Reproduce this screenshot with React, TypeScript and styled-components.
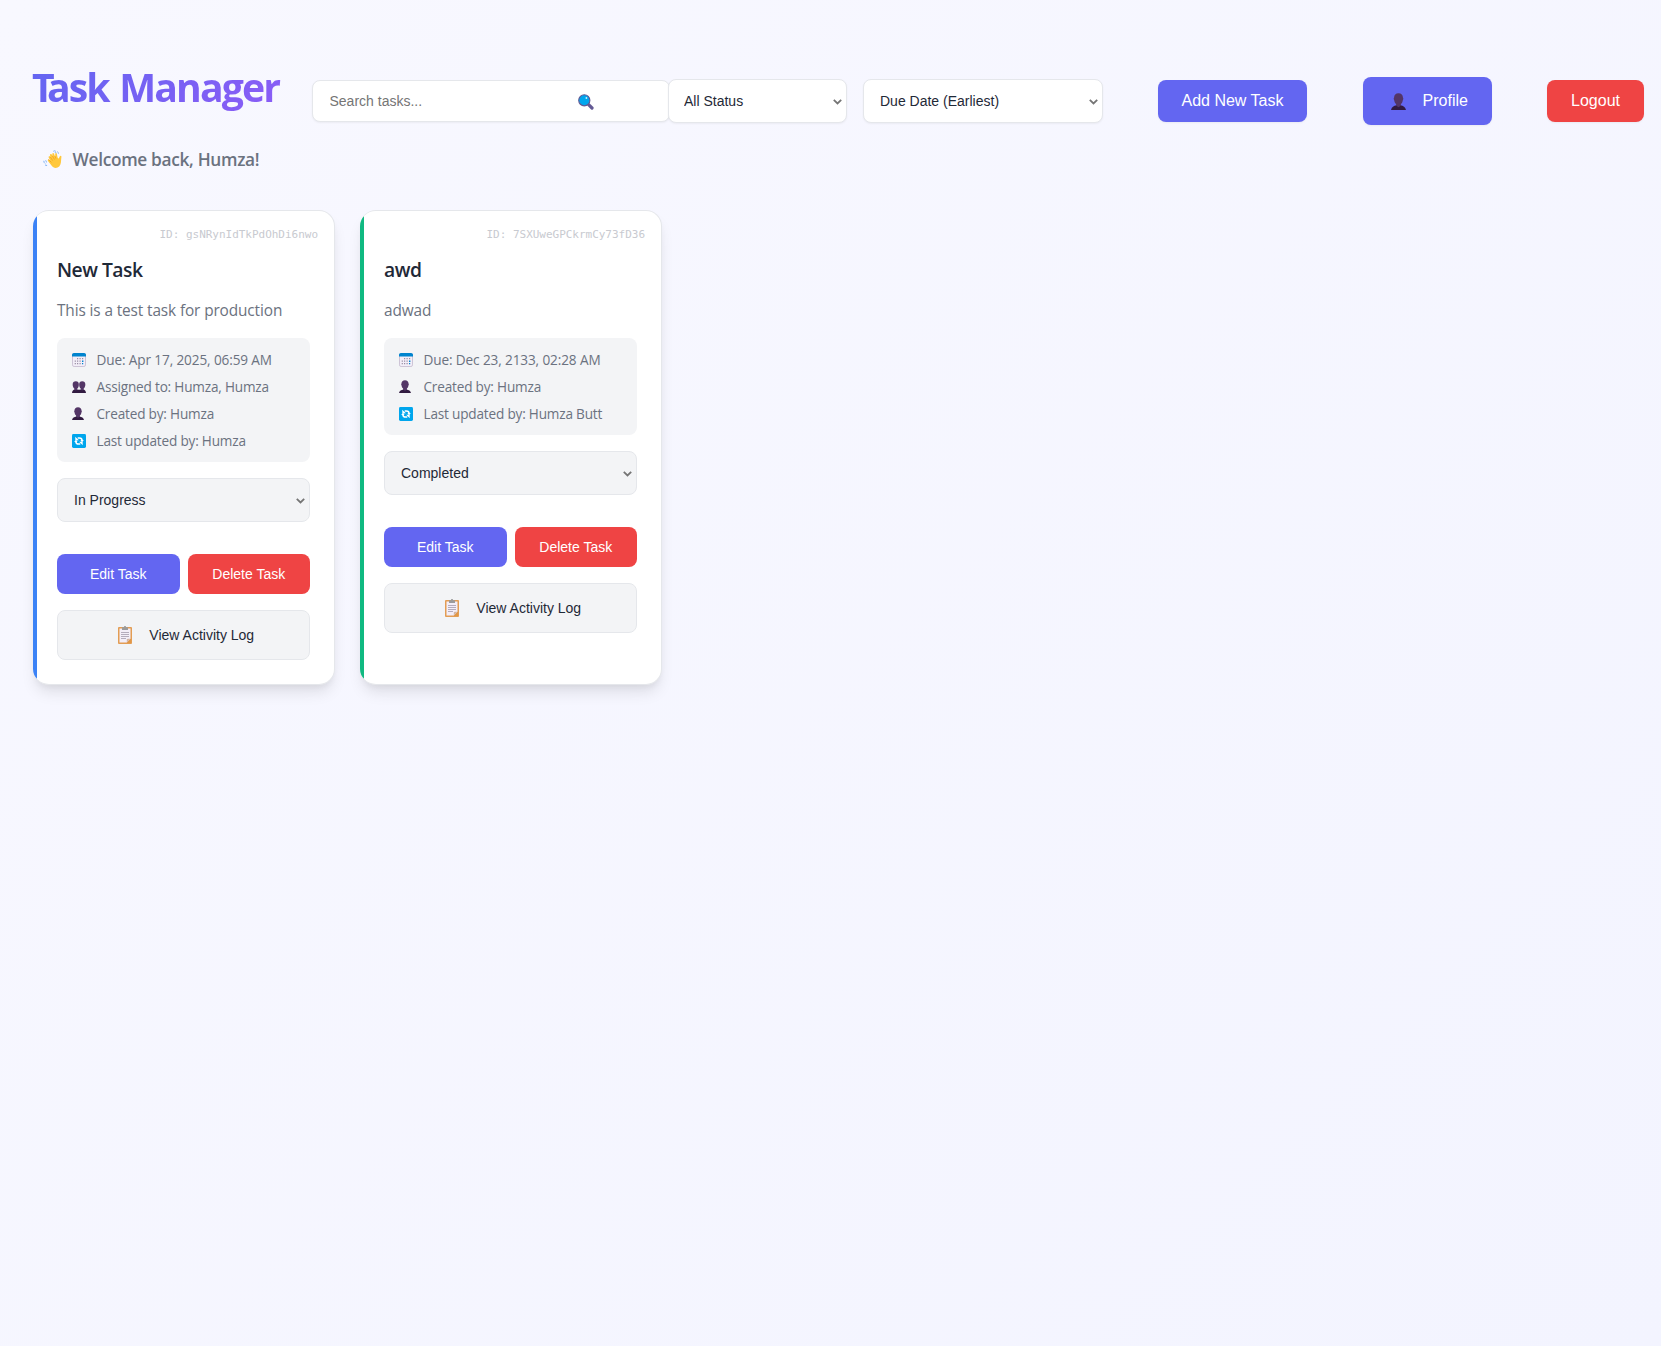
import React from "react";
import styled, { createGlobalStyle } from "styled-components";

const UI_FONT = '"Open Sans", "Noto Sans", sans-serif';
const CONTROL_FONT = '"Liberation Sans", Arial, sans-serif';

const GlobalStyle = createGlobalStyle`
  *, *::before, *::after { box-sizing: border-box; }
  body {
    margin: 0;
    font-family: ${UI_FONT};
    color: #1f2937;
  }
  h1, h2, p { margin: 0; }
`;

const Page = styled.div`
  min-height: 100vh;
  padding: 77px 17px 0 33px;
  background: linear-gradient(135deg, #f8f8ff 0%, #f3f4ff 100%);
`;

const Header = styled.header`
  display: flex;
  align-items: center;
  height: 48px;
`;

const Title = styled.h1`
  width: 280px;
  height: 48px;
  margin: 0 0 28px -1px;
  font-size: 39.2px;
  line-height: 48px;
  font-weight: 700;
  letter-spacing: -1.85px;
  word-spacing: 2px;
  white-space: nowrap;
  background: linear-gradient(135deg, #6366f1, #8b5cf6);
  background-size: 249px 100%;
  -webkit-background-clip: text;
  background-clip: text;
  color: transparent;
  &::first-letter { letter-spacing: -7.8px; }
`;

const SearchBox = styled.div`
  display: flex;
  align-items: center;
  width: 357.5px;
  height: 42px;
  padding: 0 75px 0 16px;
  border: 1px solid #e5e7eb;
  border-radius: 8px;
  background: #fff;
  box-shadow: 0 1px 2px rgba(0, 0, 0, 0.05);
  & > svg { margin-top: 2px; }
`;

const SearchInput = styled.input`
  flex: 1;
  min-width: 0;
  padding: 0 0 0 0.5px;
  border: 0;
  outline: 0;
  background: transparent;
  font: 14px ${CONTROL_FONT};
  &::placeholder { color: #757575; }
`;

const SelectWrap = styled.div<{ $width: number }>`
  display: grid;
  align-items: center;
  width: ${(p) => p.$width}px;
  & > * { grid-area: 1 / 1; }
  & > svg {
    justify-self: end;
    margin: 1px 5px 0 0;
    pointer-events: none;
  }
`;

const NativeSelect = styled.select<{ $soft?: boolean; $inset?: number }>`
  appearance: none;
  display: block;
  width: 100%;
  height: 44px;
  padding: 0 0 0 ${(p) => p.$inset ?? 16}px;
  border: 1px solid #e5e7eb;
  border-radius: 8px;
  background-color: ${(p) => (p.$soft ? "#f3f4f6" : "#fff")};
  color: #1f2937;
  font: 14px ${CONTROL_FONT};
  box-shadow: ${(p) => (p.$soft ? "none" : "0 1px 2px rgba(0, 0, 0, 0.05)")};
`;

const Filters = styled.div`
  display: flex;
  gap: 16px;
  margin-left: -2px;
`;

const Actions = styled.div`
  display: flex;
  align-items: center;
  justify-content: space-between;
  flex: 1;
  margin-left: 55px;
`;

const Button = styled.button<{ $tone: "primary" | "danger"; $size?: "sm" | "md" | "lg" }>`
  display: flex;
  align-items: center;
  justify-content: center;
  flex: ${(p) => (p.$size === "sm" ? "1" : "none")};
  gap: 17px;
  height: ${(p) => (p.$size === "sm" ? 40 : p.$size === "lg" ? 48 : 42)}px;
  padding: 0 ${(p) => (p.$size === "sm" ? 0 : 24)}px;
  padding-left: ${(p) => (p.$size === "lg" ? 28 : undefined)}px;
  border: 0;
  border-radius: 8px;
  background: ${(p) => (p.$tone === "primary" ? "#6366f1" : "#ef4444")};
  color: #fff;
  font: ${(p) => (p.$size === "sm" ? 14 : 16)}px ${CONTROL_FONT};
  white-space: nowrap;
  box-shadow: ${(p) => (p.$size === "sm" ? "none" : "0 1px 2px rgba(0, 0, 0, 0.05)")};
`;

const Welcome = styled.p`
  display: flex;
  align-items: center;
  gap: 10.5px;
  height: 26px;
  margin: 21px 0 38px 10px;
  color: #6b7280;
  font-size: 17.3px;
  font-weight: 600;
  letter-spacing: -0.32px;
`;

const Board = styled.main`
  display: grid;
  grid-template-columns: repeat(auto-fill, 302px);
  column-gap: 25px;
`;

const Card = styled.article<{ $accent: string }>`
  position: relative;
  height: 474.5px;
  padding: 15px 24px 23px 24px;
  border: 1px solid #e5e7eb;
  border-left: 0;
  border-radius: 16px;
  background: #fff;
  overflow: hidden;
  box-shadow: 0 10px 15px -3px rgba(0, 0, 0, 0.1), 0 4px 6px -2px rgba(0, 0, 0, 0.05);
  &::before {
    content: "";
    position: absolute;
    inset: 0 auto 0 0;
    width: 4px;
    background: ${(p) => p.$accent};
  }
`;

const TaskId = styled.div`
  margin-right: -8px;
  height: 17px;
  color: #c8cad0;
  font: 11px/17px "DejaVu Sans Mono", "Liberation Mono", monospace;
  letter-spacing: -0.02px;
  text-align: right;
`;

const TaskTitle = styled.h2`
  margin-top: 11px;
  height: 32px;
  font-size: 19.3px;
  line-height: 32px;
  font-weight: 600;
  letter-spacing: -0.5px;
`;

const Description = styled.p`
  margin: 12px 0 14px;
  height: 26px;
  color: #6b7280;
  font-size: 15.4px;
  line-height: 26px;
  letter-spacing: -0.12px;
`;

const Meta = styled.ul`
  margin: 0 0 16px;
  padding: 8px 14.5px;
  border-radius: 8px;
  background: #f3f4f6;
  list-style: none;
`;

const MetaRow = styled.li<{ $wide: boolean }>`
  display: flex;
  align-items: center;
  gap: 11px;
  height: 27px;
  color: #6b7280;
  font-size: 13.6px;
  letter-spacing: ${(p) => (p.$wide ? -0.12 : -0.19)}px;
  white-space: nowrap;
`;

const CardActions = styled.div`
  display: flex;
  gap: 8px;
  margin: 32px 0 16px;
`;

const LogButton = styled.button`
  display: flex;
  align-items: center;
  justify-content: center;
  gap: 17px;
  width: 100%;
  height: 50px;
  padding: 0 0 0 5.5px;
  border: 1px solid #e5e7eb;
  border-radius: 8px;
  background: #f3f4f6;
  color: #1f2937;
  font: 14px ${CONTROL_FONT};
`;

const Glyph = styled.svg`
  display: block;
  flex: none;
`;

const Chevron = () => (
  <Glyph width="9" height="6" viewBox="0 0 9 6">
    <path d="M.8.9 4.5 4.5 8.2.9" fill="none" stroke="#757575" strokeWidth="1.8" />
  </Glyph>
);

const Magnifier = () => (
  <Glyph width="16" height="16" viewBox="0 0 16 16">
    <path d="M10.6 10.6 14 14" stroke="#635994" strokeWidth="3.2" strokeLinecap="round" />
    <circle cx="6.3" cy="6.3" r="5.6" fill="#00a6ed" stroke="#635994" strokeWidth="1.1" />
    <circle cx="8.4" cy="4" r="0.9" fill="#c9efff" />
  </Glyph>
);

const Person = ({ width, height }: { width: number; height: number }) => (
  <Glyph width={width} height={height} viewBox="0 0 16 18" preserveAspectRatio="none">
    <path d="M6 10h4v3c3.2.5 5.2 1.8 6 5H0c.8-3.2 2.8-4.5 6-5z" fill="#321b41" />
    <path d="M8 .3c3 0 4.7 1.9 4.7 4.5l.5 1.2-.6 1.6c-.3 2-1.1 3.5-2.2 4.3v1.7L8 15l-2.4-1.4v-1.7C4.5 11.1 3.7 9.6 3.4 7.6L2.8 6l.5-1.2C3.3 2.2 5 .3 8 .3z" fill="#533566" />
  </Glyph>
);

const People = () => (
  <Glyph width="14" height="12" viewBox="0 0 14 12">
    <path d="M0 12c.2-2.2 1.2-3.4 3-3.7L7 8.8l4-.5c1.8.3 2.8 1.5 3 3.7z" fill="#321b41" />
    <path d="M3.8.2c2 0 3 1.1 3 2.8v1.2C6.7 5.8 6.1 6.9 5.3 7.5v1L3.9 9.6 2.3 8.5v-1C1.5 6.9.9 5.8.7 4.2V3C.7 1.3 1.8.2 3.8.2zM10.2.2c2 0 3.1 1.1 3.1 2.8v1.2c-.2 1.6-.8 2.7-1.6 3.3v1l-1.6 1.1-1.4-1.1v-1C7.9 6.9 7.3 5.8 7.2 4.2V3c0-1.7 1-2.8 3-2.8z" fill="#533566" />
  </Glyph>
);

const Calendar = () => (
  <Glyph width="14" height="14" viewBox="0 0 14 14">
    <rect x=".5" y=".5" width="13" height="13" rx="1.6" fill="#f3eef8" stroke="#cdc4d6" />
    <path d="M0 3.5V2C0 .8.8 0 2 0h10c1.200 0 2 .8 2 2v1.5z" fill="#0084ce" />
    <path d="M5 5h1.2v1.2H5zM7.5 5h1.2v1.2H7.5zM2.7 7.5h1.2v1.2H2.7zM5 7.5h1.2v1.2H5zM7.5 7.5h1.2v1.2H7.5zM2.7 10h1.2v1.2H2.7zM5 10h1.2v1.2H5zM7.5 10h1.2v1.2H7.5zM10 5h1.2v1.2H10z" fill="#998ea4" />
    <path d="M10 7.5h1.4v1.4H10zM10 10h1.2v1.2H10z" fill="#0084ce" />
  </Glyph>
);

const Refresh = () => (
  <Glyph width="14" height="14" viewBox="0 0 14 14">
    <rect width="14" height="14" rx="1.4" fill="#00a6ed" />
    <path d="M5.7 3.9h1.7c1.7 0 2.7.9 2.7 2.6M8.3 10.1H6.600C4.9 10.1 3.9 9.2 3.9 7.5" fill="none" stroke="#fff" strokeWidth="1.5" />
    <path d="M3.2 2.8l.2 3.7 3.5-.3zM10.8 11.2l-.2-3.7-3.5.3zM11.8 6H8.4l1.7 2.2zM2.2 8h3.4L3.9 5.8z" fill="#fff" />
  </Glyph>
);

const Clipboard = () => (
  <Glyph width="14" height="18" viewBox="0 0 14 18">
    <rect y="1" width="14" height="17" rx="1" fill="#e39d54" />
    <path d="M1.5 2.5h11v10.3l-3.7 3.7H1.5z" fill="#f3eef8" />
    <path d="M13 12.7V17H8.8z" fill="#e19747" />
    <path d="M8.8 13.7q0-1 1-1h2.7l-3.7 3.7z" fill="#d3b4a4" />
    <path d="M4 1.2h1.8Q5.9 0 7 0t1.2 1.2H10V4H4z" fill="#9b9b9b" />
    <path d="M3 6.5h8M3 8.5h8M3 10.5h8M3 12.5h5" stroke="#b4acbc" strokeWidth="1" />
  </Glyph>
);

const Wave = () => (
  <Glyph width="19" height="18" viewBox="0 0 19 18">
    <path d="M5.7 7.5c-.6-1 .7-1.8 1.4-1l.5.6L7 5.3c-.4-1.1 1.1-1.7 1.7-.7l.9 1.5-.3-2c-.2-1.1 1.3-1.5 1.7-.4l1 2.7.3-.2-.1-2.2c0-1.1 1.5-1.2 1.7-.1l.7 3.7c.4 1 1 1.1 1.4.3l.7-1.5c.6-1.1 2-.6 1.7.6l-.3 3.2c-.1 3.3-.9 6.2-3.5 7.3-2.4 1-4.7 0-6.1-1.9l-3.5-4.5c-.7-1 .6-2.1 1.5-1.2l.8.8z" fill="#ffc83d" />
    <path d="m7.1 6.7 2.6 3.9M9.3 5.8l2.2 3.7M11.9 5.9l1 2.7M5.4 9.4l3 3" stroke="#ee9f20" strokeWidth=".75" fill="none" />
    <path d="M10.3 1.3q1.3-1 2.5 0M14.3 1.6q1.2.7 1.2 2M11.8 2.7q.9-.5 1.6.2M.8 10.8q0 1.9 1.4 2.7M2.7 10.3q.1 1.4 1.3 2.1M2 14.8q.9.9 2.1.6" stroke="#7fb2f5" strokeWidth="1" fill="none" />
  </Glyph>
);

const PersonSlot = styled.span`
  display: flex;
  justify-content: center;
  width: 14px;
  padding-right: 1px;
`;

type MetaKind = "due" | "assigned" | "created" | "updated";

const META_ICONS: Record<MetaKind, React.ReactNode> = {
  due: <Calendar />,
  assigned: <People />,
  created: (
    <PersonSlot>
      <Person width={12} height={13} />
    </PersonSlot>
  ),
  updated: <Refresh />,
};

interface Task {
  id: string;
  title: string;
  description: string;
  accent: string;
  status: string;
  meta: [MetaKind, string][];
}

const TASKS: Task[] = [
  {
    id: "gsNRynIdTkPdOhDi6nwo",
    title: "New Task",
    description: "This is a test task for production",
    accent: "#3b82f6",
    status: "In Progress",
    meta: [
      ["due", "Due: Apr 17, 2025, 06:59 AM"],
      ["assigned", "Assigned to: Humza, Humza"],
      ["created", "Created by: Humza"],
      ["updated", "Last updated by: Humza"],
    ],
  },
  {
    id: "7SXUweGPCkrmCy73fD36",
    title: "awd",
    description: "adwad",
    accent: "#10b981",
    status: "Completed",
    meta: [
      ["due", "Due: Dec 23, 2133, 02:28 AM"],
      ["created", "Created by: Humza"],
      ["updated", "Last updated by: Humza Butt"],
    ],
  },
];

interface SelectProps {
  value: string;
  width: number;
  soft?: boolean;
  inset?: number;
}

const Select = ({ value, width, soft, inset }: SelectProps) => (
  <SelectWrap $width={width}>
    <NativeSelect $soft={soft} $inset={inset} defaultValue={value}>
      <option>{value}</option>
    </NativeSelect>
    <Chevron />
  </SelectWrap>
);

const TaskCard = ({ task }: { task: Task }) => (
  <Card $accent={task.accent}>
    <TaskId>ID: {task.id}</TaskId>
    <TaskTitle>{task.title}</TaskTitle>
    <Description>{task.description}</Description>
    <Meta>
      {task.meta.map(([kind, text]) => (
        <MetaRow key={kind} $wide={kind === "due"}>
          {META_ICONS[kind]}
          {text}
        </MetaRow>
      ))}
    </Meta>
    <Select value={task.status} width={253} soft />
    <CardActions>
      <Button $tone="primary" $size="sm">Edit Task</Button>
      <Button $tone="danger" $size="sm">Delete Task</Button>
    </CardActions>
    <LogButton>
      <Clipboard />
      View Activity Log
    </LogButton>
  </Card>
);

export default function App() {
  return (
    <>
      <GlobalStyle />
      <Page>
        <Header>
          <Title>Task Manager</Title>
          <SearchBox>
            <SearchInput placeholder="Search tasks..." />
            <Magnifier />
          </SearchBox>
          <Filters>
            <Select value="All Status" width={179} inset={15.5} />
            <Select value="Due Date (Earliest)" width={240} inset={16.5} />
          </Filters>
          <Actions>
            <Button $tone="primary">Add New Task</Button>
            <Button $tone="primary" $size="lg">
              <Person width={15} height={17} />
              Profile
            </Button>
            <Button $tone="danger">Logout</Button>
          </Actions>
        </Header>
        <Welcome>
          <Wave />
          Welcome back, Humza!
        </Welcome>
        <Board>
          {TASKS.map((task) => (
            <TaskCard key={task.id} task={task} />
          ))}
        </Board>
      </Page>
    </>
  );
}
